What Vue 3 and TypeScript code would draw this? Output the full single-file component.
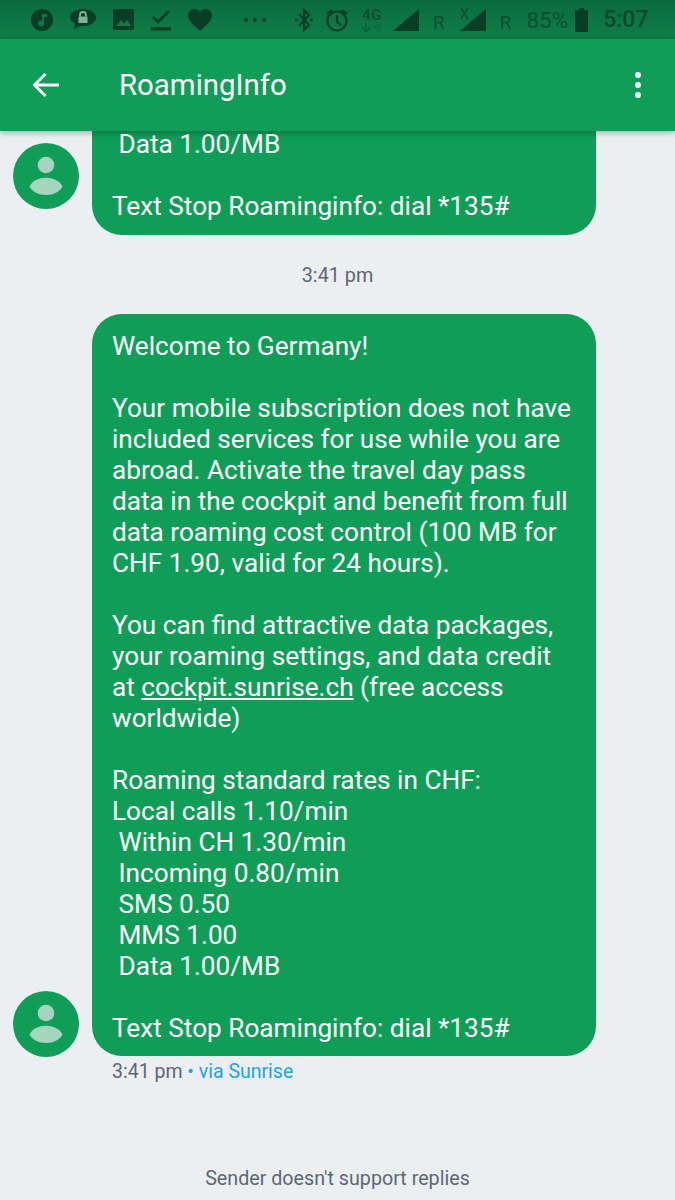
<script setup lang="ts">
const firstText = ' Data 1.00/MB\n\nText Stop Roaminginfo: dial *135#'
const beforeLink = 'Welcome to Germany!\n\nYour mobile subscription does not have\nincluded services for use while you are\nabroad. Activate the travel day pass\ndata in the cockpit and benefit from full\ndata roaming cost control (100 MB for\nCHF 1.90, valid for 24 hours).\n\nYou can find attractive data packages,\nyour roaming settings, and data credit\nat '
const afterLink = ' (free access\nworldwide)\n\nRoaming standard rates in CHF:\nLocal calls 1.10/min\n Within CH 1.30/min\n Incoming 0.80/min\n SMS 0.50\n MMS 1.00\n Data 1.00/MB\n\nText Stop Roaminginfo: dial *135#'
</script>

<template>
  <div class="page">
    <div class="status">
      <div class="notifs">
        <svg width="22" height="22" viewBox="0 0 22 22"><circle cx="11" cy="11" r="11" fill="#0a3d25" /><path d="M11 5h5v3h-3v6.500a3 3 0 1 1-2-2.800z" fill="#0f7a47" /></svg>
        <svg class="up" width="26" height="20" viewBox="0 0 26 20"><path d="M13 0c7 0 13 3.500 13 8.500S20 17 13 17c-1 0-2 0-3-.3L4 20l1-5.500c-3-1.500-5-3.500-5-6C0 3.500 6 0 13 0z" fill="#0a3d25" /><path d="M8.500 7.500h9v6.500h-9z" fill="#7fb596" /><path d="M10 7.500V6a3 3 0 0 1 6 0v1.500" fill="none" stroke="#7fb596" stroke-width="1.800" /></svg>
        <svg width="21" height="21" viewBox="0 0 21 21"><rect width="21" height="21" rx="2" fill="#0a3d25" /><path d="M3 17l5-6 3 3.500 3-3.500 4 6z" fill="#0f7a47" /></svg>
        <svg width="20" height="23" viewBox="0 0 20 23"><path d="M2 9l5 5L18 3" fill="none" stroke="#0a3d25" stroke-width="2.800" /><rect y="19" width="20" height="3.500" fill="#0a3d25" /></svg>
        <svg width="24" height="22" viewBox="0 0 24 22"><path d="M12 22C4 15 0 11 0 6.500 0 3 2.700 0 6.300 0 8.600 0 10.800 1.100 12 3c1.200-1.900 3.400-3 5.700-3C21.300 0 24 3 24 6.500 24 11 20 15 12 22z" fill="#0a3d25" /></svg>
      </div>
      <div class="more">
        <i></i><i></i><i></i>
      </div>
      <div class="sys">
        <svg width="18" height="24" viewBox="0 0 18 24"><path d="M4 6l10 11-5 5V2l5 5L4 18" fill="none" stroke="#0a3d25" stroke-width="2.200" /><circle cx="1.500" cy="12" r="1.400" fill="#0a3d25" /><circle cx="16.500" cy="12" r="1.400" fill="#0a3d25" /></svg>
        <svg width="24" height="24" viewBox="0 0 24 24"><circle cx="12" cy="13" r="9.500" fill="none" stroke="#0a3d25" stroke-width="2.200" /><path d="M12 7v6.500l4 4M2 6l5-4M22 6l-5-4" fill="none" stroke="#0a3d25" stroke-width="2.200" /></svg>
        <div class="net">
          <span>4G</span>
          <svg width="22" height="9" viewBox="0 0 22 9"><path d="M5 0v5M1 4l4 4.500L9 4" fill="none" stroke="#0c6139" stroke-width="2" /><path d="M17 9V4M13 5l4-4.500L21 5" fill="none" stroke="#0c6f41" stroke-width="2" /></svg>
        </div>
        <svg class="signal" width="26" height="22" viewBox="0 0 26 22"><path d="M0 22L26 0v22z" fill="#0a3d25" /></svg>
        <span class="roam">R</span>
        <div class="xsignal">
          <span>X</span>
          <svg width="26" height="22" viewBox="0 0 26 22"><path d="M0 22L26 0v22z" fill="#0a3d25" /></svg>
        </div>
        <span class="roam">R</span>
        <span class="pct">85%</span>
        <svg class="batt" width="13" height="24" viewBox="0 0 13 24"><path d="M4 0h5v2h4v22H0V2h4z" fill="#0a3d25" /></svg>
        <span class="time">5:07</span>
      </div>
    </div>

    <header class="bar">
      <svg class="back" width="28" height="26" viewBox="0 0 28 26"><path d="M27 13H3M13.500 2L2.500 13l11 11" fill="none" stroke="#fff" stroke-width="2.800" /></svg>
      <h1>RoamingInfo</h1>
      <div class="menu"><i></i><i></i><i></i></div>
    </header>

    <main class="list">
      <div class="msg first">
        <div class="avatar stuck">
          <svg width="66" height="66" viewBox="0 0 66 66"><circle cx="33" cy="22" r="8.300" fill="#a5d6bd" /><path d="M16.500 43.500C19 38 26 34.700 33 34.700S47 38 49.500 43.500C47 48.500 40 52 33 52S19 48.500 16.500 43.500z" fill="#a5d6bd" /></svg>
        </div>
        <div class="bubble">{{ firstText }}</div>
      </div>

      <div class="stamp">3:41 pm</div>

      <div class="msg second">
        <div class="avatar">
          <svg width="66" height="66" viewBox="0 0 66 66"><circle cx="33" cy="22" r="8.300" fill="#a5d6bd" /><path d="M16.500 43.500C19 38 26 34.700 33 34.700S47 38 49.500 43.500C47 48.500 40 52 33 52S19 48.500 16.500 43.500z" fill="#a5d6bd" /></svg>
        </div>
        <div class="bubble">{{ beforeLink }}<u>cockpit.sunrise.ch</u>{{ afterLink }}</div>
      </div>

      <div class="meta">3:41 pm <span class="via">• via Sunrise</span></div>
    </main>

    <footer class="foot">Sender doesn't support replies</footer>
  </div>
</template>

<style>
html,
body {
  margin: 0;
  background: #ebeff2;
}
</style>

<style scoped>
.page {
  width: 675px;
  height: 1200px;
  display: flex;
  flex-direction: column;
  overflow: hidden;
  background: #ebeff2;
  font-family: Roboto, "Liberation Sans", sans-serif;
}

.status {
  flex: none;
  height: 39px;
  display: flex;
  align-items: center;
  padding-left: 31px;
  background: linear-gradient(#0b6b3e, #0e7f49);
  color: #0a3d25;
}

.notifs {
  display: flex;
  align-items: center;
  gap: 17px;
}

.notifs svg {
  display: block;
}

.up {
  margin-top: -2px;
}

.more {
  display: flex;
  gap: 5px;
  margin-left: 32px;
}

.more i {
  width: 4px;
  height: 4px;
  border-radius: 50%;
  background: #0a3d25;
}

.sys {
  display: flex;
  align-items: center;
  margin-left: 29px;
}

.sys > svg,
.sys > div,
.sys > span {
  margin-left: 12px;
  flex: none;
}

.sys > svg:first-child {
  margin-left: 0;
}

.net {
  display: flex;
  flex-direction: column;
  align-items: center;
  width: 22px;
  line-height: 1;
  color: #0a4f2e;
}

.net span {
  font-size: 15px;
  font-weight: 500;
  letter-spacing: 0.5px;
}

.net svg {
  display: block;
}

.sys > .signal {
  margin-left: 10px;
}

.roam {
  font-size: 19px;
  color: #0a4f2e;
  margin-top: 5px;
}

.sys > .roam {
  margin-left: 14px;
}

.xsignal {
  position: relative;
  width: 26px;
  height: 22px;
}

.sys > .xsignal {
  margin-left: 15px;
}

.xsignal svg {
  display: block;
}

.xsignal span {
  position: absolute;
  left: 0;
  top: -4px;
  font-size: 15px;
  line-height: 18px;
  color: #0a4f2e;
}

.pct {
  font-size: 22.500px;
  color: #0a4f2e;
}

.sys > .pct {
  margin-left: 15px;
}

.sys > .batt {
  margin-left: 7px;
}

.time {
  font-size: 23px;
  font-weight: 500;
  color: #0a4a2b;
}

.sys > .time {
  margin-left: 15px;
}

.bar {
  flex: none;
  position: relative;
  z-index: 2;
  height: 92px;
  display: flex;
  align-items: center;
  padding: 0 34px 0 32px;
  background: #109d58;
  box-shadow: 0 2px 6px rgba(0, 0, 0, 0.28);
  color: #fff;
}

.back {
  flex: none;
}

.bar h1 {
  flex: 1;
  margin: 0 0 0 59px;
  font-size: 29.400px;
  font-weight: 400;
}

.menu {
  display: flex;
  flex-direction: column;
  gap: 4px;
}

.menu i {
  width: 6px;
  height: 6px;
  border-radius: 50%;
  background: #fff;
}

.list {
  flex: 1;
  min-height: 0;
  overflow: hidden;
  display: flex;
  flex-direction: column;
  padding-left: 13px;
}

.msg {
  display: flex;
  align-items: flex-end;
  gap: 13px;
}

.msg.first {
  margin-top: -2px;
}

.msg.first .bubble {
  border-top-left-radius: 0;
  border-top-right-radius: 0;
  padding-top: 0;
}

.msg.second .bubble {
  padding-bottom: 12px;
}

.avatar {
  flex: none;
  width: 66px;
  height: 66px;
  margin-bottom: -1px;
  border-radius: 50%;
  background: #109d58;
}

.avatar svg {
  display: block;
}

.avatar.stuck {
  margin-bottom: 26px;
}

.bubble {
  width: 504px;
  box-sizing: border-box;
  padding: 17px 20px 13px;
  border-radius: 30px;
  background: #109d58;
  color: #fff;
  font-size: 26.200px;
  line-height: 31px;
  white-space: pre-wrap;
}

.stamp {
  margin: 29px 0 26px -13px;
  text-align: center;
  font-size: 19.800px;
  line-height: 24px;
  color: #5c6873;
}

.meta {
  margin: 4px 0 0 99px;
  font-size: 19.500px;
  line-height: 24px;
  color: #5c6873;
}

.via {
  color: #1ba4e6;
}

.foot {
  flex: none;
  height: 43px;
  padding-top: 1px;
  text-align: center;
  font-size: 19.700px;
  line-height: 43px;
  color: #5c6873;
}
</style>
